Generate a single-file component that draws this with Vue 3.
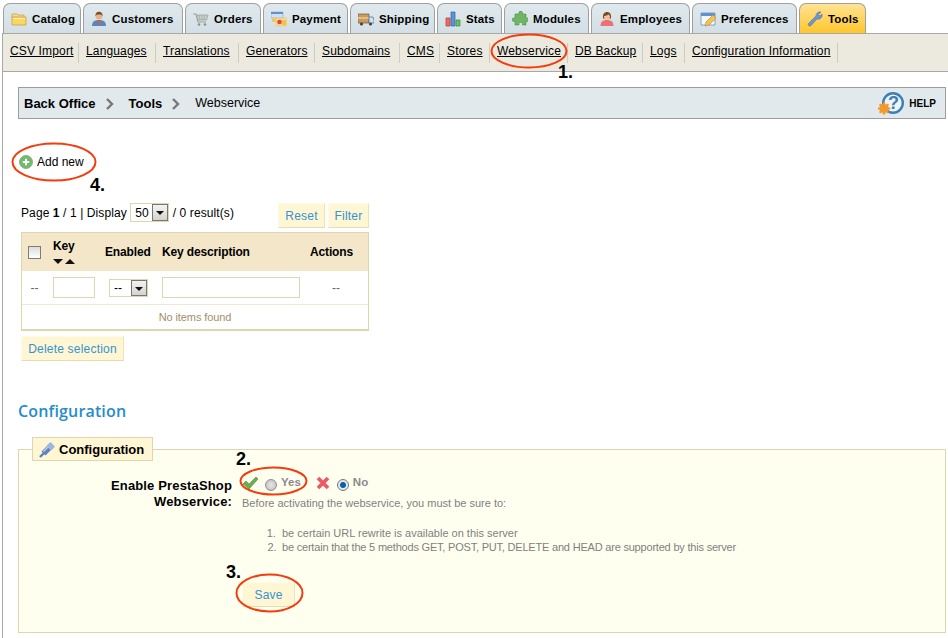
<template>
  <div class="page">
    <!-- main tabs -->
    <div class="tabs">
      <a v-for="tab in tabs" :key="tab.name" class="tab" :class="{ active: tab.name === 'Tools' }" :style="{ width: tab.width + 'px' }">
        <svg class="tab-icon" width="16" height="16" viewBox="0 0 16 16">
          <g v-if="tab.name === 'Catalog'">
            <path d="M1 3h5l1 1h6v3H1z" fill="#f6d98a" stroke="#c9993f" stroke-width=".7" />
            <path d="M1 6h14v8H1z" fill="#f8d860" stroke="#c9993f" stroke-width=".7" />
            <path d="M2 7h12v1H2z" fill="#fff2b8" />
          </g>
          <g v-else-if="tab.name === 'Customers'">
            <path d="M1 15c0-4 2-6 7-6s7 2 7 6z" fill="#5b86b8" />
            <path d="M6.500 9h3L8 14z" fill="#e05a3a" />
            <circle cx="8" cy="5" r="3.500" fill="#e8b48c" />
            <path d="M4.400 5c0-3 1.500-4.200 3.600-4.200S11.600 2 11.600 5L10 3.500H6z" fill="#7c4a28" />
          </g>
          <g v-else-if="tab.name === 'Orders'" fill="none" stroke="#9aa39c">
            <path d="M0 3h3l2 8h8" stroke-width="1.200" />
            <path d="M3.500 4H15l-1.500 5H5z" fill="#c9d0ca" stroke-width=".8" />
            <path d="M6 4l1 5M9 4v5M12 4l-1 5" stroke-width=".6" />
            <circle cx="6" cy="13.500" r="1.300" fill="#8a928c" stroke="none" />
            <circle cx="12" cy="13.500" r="1.300" fill="#8a928c" stroke="none" />
          </g>
          <g v-else-if="tab.name === 'Payment'">
            <path d="M0 1h12v6H0z" fill="#cfe0f2" stroke="#8aa8c8" stroke-width=".6" />
            <path d="M0 1h12v2H0z" fill="#5f92cf" />
            <path d="M1 7h4v4H1z" fill="#f6c65a" />
            <path d="M5 7h11v8H5z" fill="#f8dc86" stroke="#d8c898" stroke-width=".6" />
            <circle cx="8.500" cy="11" r="2.300" fill="#e2453a" />
            <path d="M11 9h4v5h-4z" fill="#f2c24a" />
          </g>
          <g v-else-if="tab.name === 'Shipping'">
            <path d="M0 3h11v9H0z" fill="#c89a5c" stroke="#6b5a40" stroke-width=".7" />
            <path d="M0 6h11v2H0z" fill="#e2be80" />
            <path d="M11 6h4l1 3v3h-5z" fill="#cfe0ee" stroke="#4c6f96" stroke-width=".7" />
            <circle cx="3.500" cy="13" r="1.600" fill="#444" />
            <circle cx="12.500" cy="13" r="1.600" fill="#444" />
          </g>
          <g v-else-if="tab.name === 'Stats'" stroke-width=".7">
            <path d="M1 7h4v8H1z" fill="#ee6a62" stroke="#b03a34" />
            <path d="M6 1h4v14H6z" fill="#5f92d8" stroke="#2f5fa2" />
            <path d="M11 9h4v6h-4z" fill="#6cc060" stroke="#3a8a34" />
          </g>
          <g v-else-if="tab.name === 'Modules'">
            <path d="M5 3h2V1.500a1.800 1.800 0 0 1 3.500 0V3H14v4h1.300a1.800 1.800 0 0 1 0 3.500H14V14h-3.500v-1.300a1.800 1.800 0 0 0-3.500 0V14H3v-3.500H1.500a1.800 1.800 0 0 1 0-3.500H3V3z" fill="#6fb565" stroke="#4c9145" stroke-width=".6" />
          </g>
          <g v-else-if="tab.name === 'Employees'">
            <path d="M1.500 15c0-4 2-6 6.500-6s6.500 2 6.500 6z" fill="#ee6f74" />
            <path d="M4 7c-.5-4 1.500-6 4-6s4.500 2 4 6l-1 1H5z" fill="#7c4a28" />
            <circle cx="8" cy="6" r="3" fill="#f2c09c" />
            <path d="M5 5c1 0 4-.5 4.500-2l1.500 2-.5-3h-5z" fill="#7c4a28" />
          </g>
          <g v-else-if="tab.name === 'Preferences'">
            <path d="M1 2h14v12H1z" fill="#f4f7fb" stroke="#6d8fb8" stroke-width=".8" />
            <path d="M1 2h14v3H1z" fill="#5f92cf" />
            <path d="M5 15l1-4 7-7 3 3-7 7z" fill="#f6c44e" stroke="#b98a2c" stroke-width=".6" />
          </g>
          <g v-else>
            <path d="M1.500 12.500 9 5a4 4 0 0 1 5-4l-2.500 2.500L13 5l2-2a4 4 0 0 1-5 5l-6.500 7a1.700 1.700 0 0 1-2-2.500z" fill="#6f97cf" stroke="#56739c" stroke-width=".6" />
          </g>
        </svg>
        <span>{{ tab.name }}</span>
      </a>
    </div>

    <!-- sub menu -->
    <nav class="subnav">
      <a v-for="item in subItems" :key="item.name" class="subitem" :style="{ width: item.width + 'px' }"><span>{{ item.name }}</span></a>
    </nav>

    <div class="content">
      <div class="crumbs">
        <b>Back Office</b>
        <svg class="chevron" width="8" height="12" viewBox="0 0 8 12"><path d="M1 1l5 5-5 5" fill="none" stroke="#777" stroke-width="2.400" /></svg>
        <b>Tools</b>
        <svg class="chevron" width="8" height="12" viewBox="0 0 8 12"><path d="M1 1l5 5-5 5" fill="none" stroke="#777" stroke-width="2.400" /></svg>
        <span>Webservice</span>
        <a class="help">
          <svg width="27" height="24" viewBox="0 0 27 24">
            <circle cx="15" cy="12" r="9.800" fill="#eef4f8" stroke="#3a7fb5" stroke-width="2.400" />
            <text x="15.500" y="18" text-anchor="middle" class="help-mark">?</text>
            <g fill="#f29a2e">
              <circle cx="6" cy="17.500" r="4.600" />
              <circle cx="6" cy="12.500" r="1.300" />
              <circle cx="6" cy="22.500" r="1.300" />
              <circle cx="1" cy="17.500" r="1.300" />
              <circle cx="11" cy="17.500" r="1.300" />
              <circle cx="2.500" cy="14" r="1.300" />
              <circle cx="9.500" cy="14" r="1.300" />
              <circle cx="2.500" cy="21" r="1.300" />
              <circle cx="9.500" cy="21" r="1.300" />
            </g>
          </svg>
          <span>HELP</span>
        </a>
      </div>

      <a class="add-new">
        <svg width="14" height="14" viewBox="0 0 14 14">
          <circle cx="7" cy="7" r="6.500" fill="#6dbb6b" stroke="#8fb090" />
          <path d="M7 3.800v6.400M3.800 7h6.400" stroke="#fff" stroke-width="2" />
        </svg>
        Add new
      </a>

      <div class="listing">
        <div class="pager">
          <div class="pager-text">
            Page <b>1</b> / 1 | Display <span class="select page-size"><span class="select-value">50</span><i class="select-btn"></i></span> / 0 result(s)
          </div>
          <div class="pager-actions">
            <button class="btn">Reset</button>
            <button class="btn">Filter</button>
          </div>
        </div>

        <table class="grid">
          <colgroup>
            <col style="width: 25px" />
            <col style="width: 52px" />
            <col style="width: 57px" />
            <col style="width: 148px" />
            <col />
          </colgroup>
          <thead>
            <tr>
              <th class="check-cell"><span class="checkbox"></span></th>
              <th class="key-head">Key<span class="sort"><i class="down"></i><i class="up"></i></span></th>
              <th>Enabled</th>
              <th>Key description</th>
              <th>Actions</th>
            </tr>
          </thead>
          <tbody>
            <tr class="filter-row">
              <td class="dash">--</td>
              <td><input class="field key-field" /></td>
              <td><span class="select enabled"><span class="select-value">--</span><i class="select-btn"></i></span></td>
              <td><input class="field desc-field" /></td>
              <td class="dash">--</td>
            </tr>
            <tr>
              <td colspan="5" class="empty">No items found</td>
            </tr>
          </tbody>
        </table>

        <button class="btn delete">Delete selection</button>
      </div>

      <h2 class="section-title">Configuration</h2>

      <fieldset class="config">
        <legend>
          <svg width="17" height="17" viewBox="0 0 17 17">
            <path d="M1 16l4-4" stroke="#5e7fb5" stroke-width="2.400" />
            <path d="M2.500 10.500 8 5l4 4-5.500 5.500z" fill="#5f83bf" />
            <path d="M7.500 4.500 11.500 1 16 5.500 12.500 9.500z" fill="#9db8e0" />
            <path d="M4.500 10.500 9 6" stroke="#c4d4ee" stroke-width="1.200" />
          </svg>
          Configuration
        </legend>
        <div class="form-row">
          <label class="form-label">Enable PrestaShop<br />Webservice:</label>
          <div class="form-value">
            <div class="radios">
              <svg width="17" height="15" viewBox="0 0 17 15"><path d="M1 8l3-3 3 3 7-7 2 2-9 10z" fill="#6ab04c" stroke="#4f8a3c" stroke-width=".6" /></svg>
              <span class="radio"></span>
              <span class="radio-label">Yes</span>
              <svg class="cross" width="14" height="14" viewBox="0 0 14 14"><path d="M2 2l10 10M12 2 2 12" stroke="#ee5a62" stroke-width="3.800" /></svg>
              <span class="radio on"></span>
              <span class="radio-label">No</span>
            </div>
            <p class="hint">Before activating the webservice, you must be sure to:</p>
            <ol class="hint-list">
              <li>be certain URL rewrite is available on this server</li>
              <li>be certain that the 5 methods GET, POST, PUT, DELETE and HEAD are supported by this server</li>
            </ol>
            <button class="btn save">Save</button>
          </div>
        </div>
      </fieldset>
    </div>

    <!-- hand-drawn tutorial marks on top of the screenshot -->
    <svg class="marks" width="948" height="638" viewBox="0 0 948 638">
      <ellipse cx="529" cy="51" rx="37.500" ry="16.500" />
      <ellipse cx="54" cy="162" rx="41.500" ry="18.500" />
      <ellipse cx="273.500" cy="481" rx="33" ry="13.500" />
      <ellipse cx="269.500" cy="593" rx="33" ry="18.500" />
    </svg>
    <span class="step step-1">1.</span>
    <span class="step step-2">2.</span>
    <span class="step step-3">3.</span>
    <span class="step step-4">4.</span>
  </div>
</template>

<script setup>
const tabs = [
  { name: 'Catalog', width: 78 },
  { name: 'Customers', width: 100 },
  { name: 'Orders', width: 76 },
  { name: 'Payment', width: 85 },
  { name: 'Shipping', width: 85 },
  { name: 'Stats', width: 65 },
  { name: 'Modules', width: 85 },
  { name: 'Employees', width: 99 },
  { name: 'Preferences', width: 105 },
  { name: 'Tools', width: 67 }
]

const subItems = [
  { name: 'CSV Import', width: 76 },
  { name: 'Languages', width: 77 },
  { name: 'Translations', width: 83 },
  { name: 'Generators', width: 76 },
  { name: 'Subdomains', width: 85 },
  { name: 'CMS', width: 40 },
  { name: 'Stores', width: 50 },
  { name: 'Webservice', width: 78 },
  { name: 'DB Backup', width: 75 },
  { name: 'Logs', width: 42 },
  { name: 'Configuration Information', width: 153 }
]
</script>

<style scoped>
.page {
  position: relative;
  width: 948px;
  height: 638px;
  overflow: hidden;
  background: #fff;
  color: #000;
  font-family: "Liberation Sans", Arial, sans-serif;
  font-size: 12px;
}

/* Tabs */
.tabs {
  display: flex;
  gap: 2px;
  height: 33px;
  padding: 3px 0 0 3px;
  box-sizing: border-box;
}

.tab {
  display: flex;
  align-items: center;
  gap: 5px;
  padding: 1px 0 0 7px;
  box-sizing: border-box;
  border: 1px solid #9f9f9f;
  border-bottom: 0;
  border-radius: 7px 7px 0 0;
  background: linear-gradient(#e0e9ed, #d3dfe5);
  font-weight: bold;
  font-size: 11.500px;
  letter-spacing: .15px;
}

.tab.active {
  background: linear-gradient(#ffe394, #ffc62c);
}

.tab-icon {
  flex: none;
}

/* Sub menu */
.subnav {
  display: flex;
  align-items: center;
  height: 39px;
  margin-left: 2px;
  box-sizing: border-box;
  background: #ece9df;
  border: 1px solid #a8a8a8;
  border-width: 1px 0 1px 1px;
}

.subitem {
  padding-left: 7px;
  height: 20px;
  box-sizing: border-box;
  line-height: 16px;
  white-space: nowrap;
  letter-spacing: .15px;
  border-right: 1px solid #cdcbc2;
  text-decoration: underline;
}

/* Content */
.content {
  height: 566px;
  margin-left: 2px;
  padding: 15px 2px 0 15px;
  box-sizing: border-box;
  border-left: 1px solid #a8a8a8;
}

.crumbs {
  display: flex;
  align-items: center;
  height: 32px;
  padding: 0 5px;
  box-sizing: border-box;
  background: #e1e9ed;
  border: 1px solid #9c9c9c;
}

.crumbs b {
  font-size: 13px;
}

.crumbs span {
  font-size: 12.500px;
}

.chevron {
  margin: 1px 15px 0 10px;
}

.help {
  display: flex;
  align-items: center;
  gap: 4px;
  margin-left: auto;
  padding-right: 4px;
}

.help span {
  font-size: 10px;
  font-weight: bold;
}

.help-mark {
  font-size: 18px;
  font-weight: bold;
  fill: #3a7fb5;
}

.add-new {
  display: flex;
  align-items: center;
  gap: 4px;
  height: 20px;
  margin: 33px 0 0 1px;
  font-size: 12px;
}

.listing {
  width: 348px;
  margin: 31px 0 0 3px;
}

.pager {
  display: flex;
  justify-content: space-between;
  height: 25px;
}

.pager-text {
  line-height: 20px;
  letter-spacing: .1px;
}

.pager-actions {
  display: flex;
  gap: 3px;
}

.select {
  display: inline-flex;
  align-items: center;
  box-sizing: border-box;
  background: #fff;
  border: 1px solid #dfd5af;
}

.select-value {
  flex: 1;
  padding-left: 4px;
}

.select-btn {
  position: relative;
  width: 16px;
  height: 100%;
  box-sizing: border-box;
  background: linear-gradient(#f3f3f1, #d4d3cc);
  border: 1px solid #777;
}

.select-btn::after {
  content: "";
  position: absolute;
  left: 3px;
  top: 6px;
  border: 4px solid transparent;
  border-top: 4px solid #111;
  border-bottom: 0;
}

.page-size {
  width: 39px;
  height: 19px;
  vertical-align: top;
}

.btn {
  padding: 0;
  height: 25px;
  box-sizing: border-box;
  background: #fff6d3;
  border: 1px solid;
  border-color: #fffbe8 #eee2b8 #e6dcb2 #fffbe8;
  color: #3593d3;
  font-family: inherit;
  font-size: 12px;
  letter-spacing: .2px;
}

.pager-actions .btn:first-child {
  width: 47px;
}

.pager-actions .btn:last-child {
  width: 41px;
}

/* Table */
.grid {
  width: 348px;
  margin-top: 4px;
  table-layout: fixed;
  border-collapse: separate;
  border-spacing: 0;
  border: 1px solid #dfd5af;
  border-bottom-width: 2px;
}

.grid th {
  height: 38px;
  padding: 0 0 0 6px;
  box-sizing: border-box;
  background: #f3e6c9;
  text-align: left;
  font-size: 12px;
  letter-spacing: -.15px;
  vertical-align: middle;
}

.grid td {
  padding: 0 0 0 6px;
  box-sizing: border-box;
}

.check-cell {
  padding-left: 6px !important;
}

.checkbox {
  display: block;
  width: 13px;
  height: 13px;
  box-sizing: border-box;
  background: linear-gradient(#dcdcd8, #fff);
  border: 1px solid #7c7c7c;
}

.grid .key-head {
  padding-bottom: 2px;
  line-height: 15px;
}

.sort {
  display: flex;
  gap: 2px;
  margin-top: 5px;
}

.sort i {
  width: 0;
  height: 0;
  border: 5px solid transparent;
  border-width: 5px 5px 0;
  border-top-color: #111;
}

.sort .up {
  border-width: 0 5px 5px;
  border-top-color: transparent;
  border-bottom-color: #111;
}

.filter-row td {
  height: 34px;
  border-bottom: 1px solid #efe9d4;
}

.filter-row .dash {
  padding: 0;
  text-align: center;
  color: #666;
}

.field {
  display: block;
  height: 21px;
  padding: 0;
  box-sizing: border-box;
  background: #fff;
  border: 1px solid #dfd5af;
  outline: none;
}

.key-field {
  width: 42px;
}

.desc-field {
  width: 138px;
}

.enabled {
  width: 39px;
  height: 18px;
  margin-left: 4px;
  vertical-align: middle;
}

.empty {
  height: 24px;
  padding: 0 !important;
  text-align: center;
  font-size: 11px;
  letter-spacing: -.1px;
  color: #a48e68;
}

.delete {
  display: block;
  width: 103px;
  margin-top: 5px;
}

/* Configuration */
.section-title {
  height: 24px;
  margin: 38px 0 0;
  color: #268ccd;
  font-family: "Open Sans", sans-serif;
  font-size: 16px;
  font-weight: 600;
  letter-spacing: .15px;
  line-height: 24px;
}

.config {
  height: 196px;
  margin: 14px 0 0;
  padding: 0;
  box-sizing: border-box;
  background: #fffff0;
  border: 1px solid #dfd5af;
}

.config legend {
  display: flex;
  align-items: center;
  gap: 3px;
  height: 24px;
  margin-left: 13px;
  padding: 0 8px 0 6px;
  box-sizing: border-box;
  background: #fff6d3;
  border: 1px solid #dfd5af;
  font-size: 13px;
  font-weight: bold;
}

.form-row {
  display: flex;
  gap: 10px;
  padding-top: 16px;
}

.form-label {
  flex: none;
  width: 213px;
  padding-top: 1px;
  text-align: right;
  font-size: 13px;
  font-weight: bold;
  letter-spacing: .15px;
  line-height: 16px;
}

.form-value {
  color: #7f7f7f;
}

.radios {
  display: flex;
  align-items: center;
  height: 16px;
  margin-top: -2px;
}

.cross {
  margin-left: 15px;
}

.radio {
  width: 12px;
  height: 12px;
  margin: 3px 4px 0 6px;
  box-sizing: border-box;
  border: 1px solid #8f8f8f;
  border-radius: 50%;
  background: radial-gradient(#e6e6e6, #bdbdbd);
}

.radio.on {
  margin-left: 7px;
  border-color: #777;
  background: radial-gradient(circle, #0a5ea8 0 2.500px, #e4e8ec 3.500px);
}

.radio-label {
  font-weight: bold;
  font-size: 11.500px;
  color: #8b8b8b;
  margin-top: -3px;
}

.hint {
  margin: 5px 0 0;
  font-size: 11px;
  line-height: 14px;
}

.hint-list {
  margin: 16px 0 0;
  padding-left: 40px;
  font-size: 11px;
  line-height: 14px;
}

.hint-list li::marker {
  content: counter(list-item) ".\00a0\00a0";
}

.hint-list li:last-child {
  letter-spacing: -.2px;
}

.save {
  display: block;
  width: 53px;
  margin-top: 28px;
}

/* Tutorial marks */
.marks {
  position: absolute;
  left: 0;
  top: 0;
  pointer-events: none;
}

.marks ellipse {
  fill: none;
  stroke: #f43c0c;
  stroke-width: 2;
}

.step {
  position: absolute;
  font-size: 18px;
  font-weight: bold;
  line-height: 20px;
}

.step-1 { left: 558px; top: 62px; }
.step-2 { left: 236px; top: 449px; }
.step-3 { left: 226px; top: 562px; }
.step-4 { left: 90px; top: 175px; }
</style>

<style>
html, body {
  margin: 0;
  background: #fff;
}
</style>
